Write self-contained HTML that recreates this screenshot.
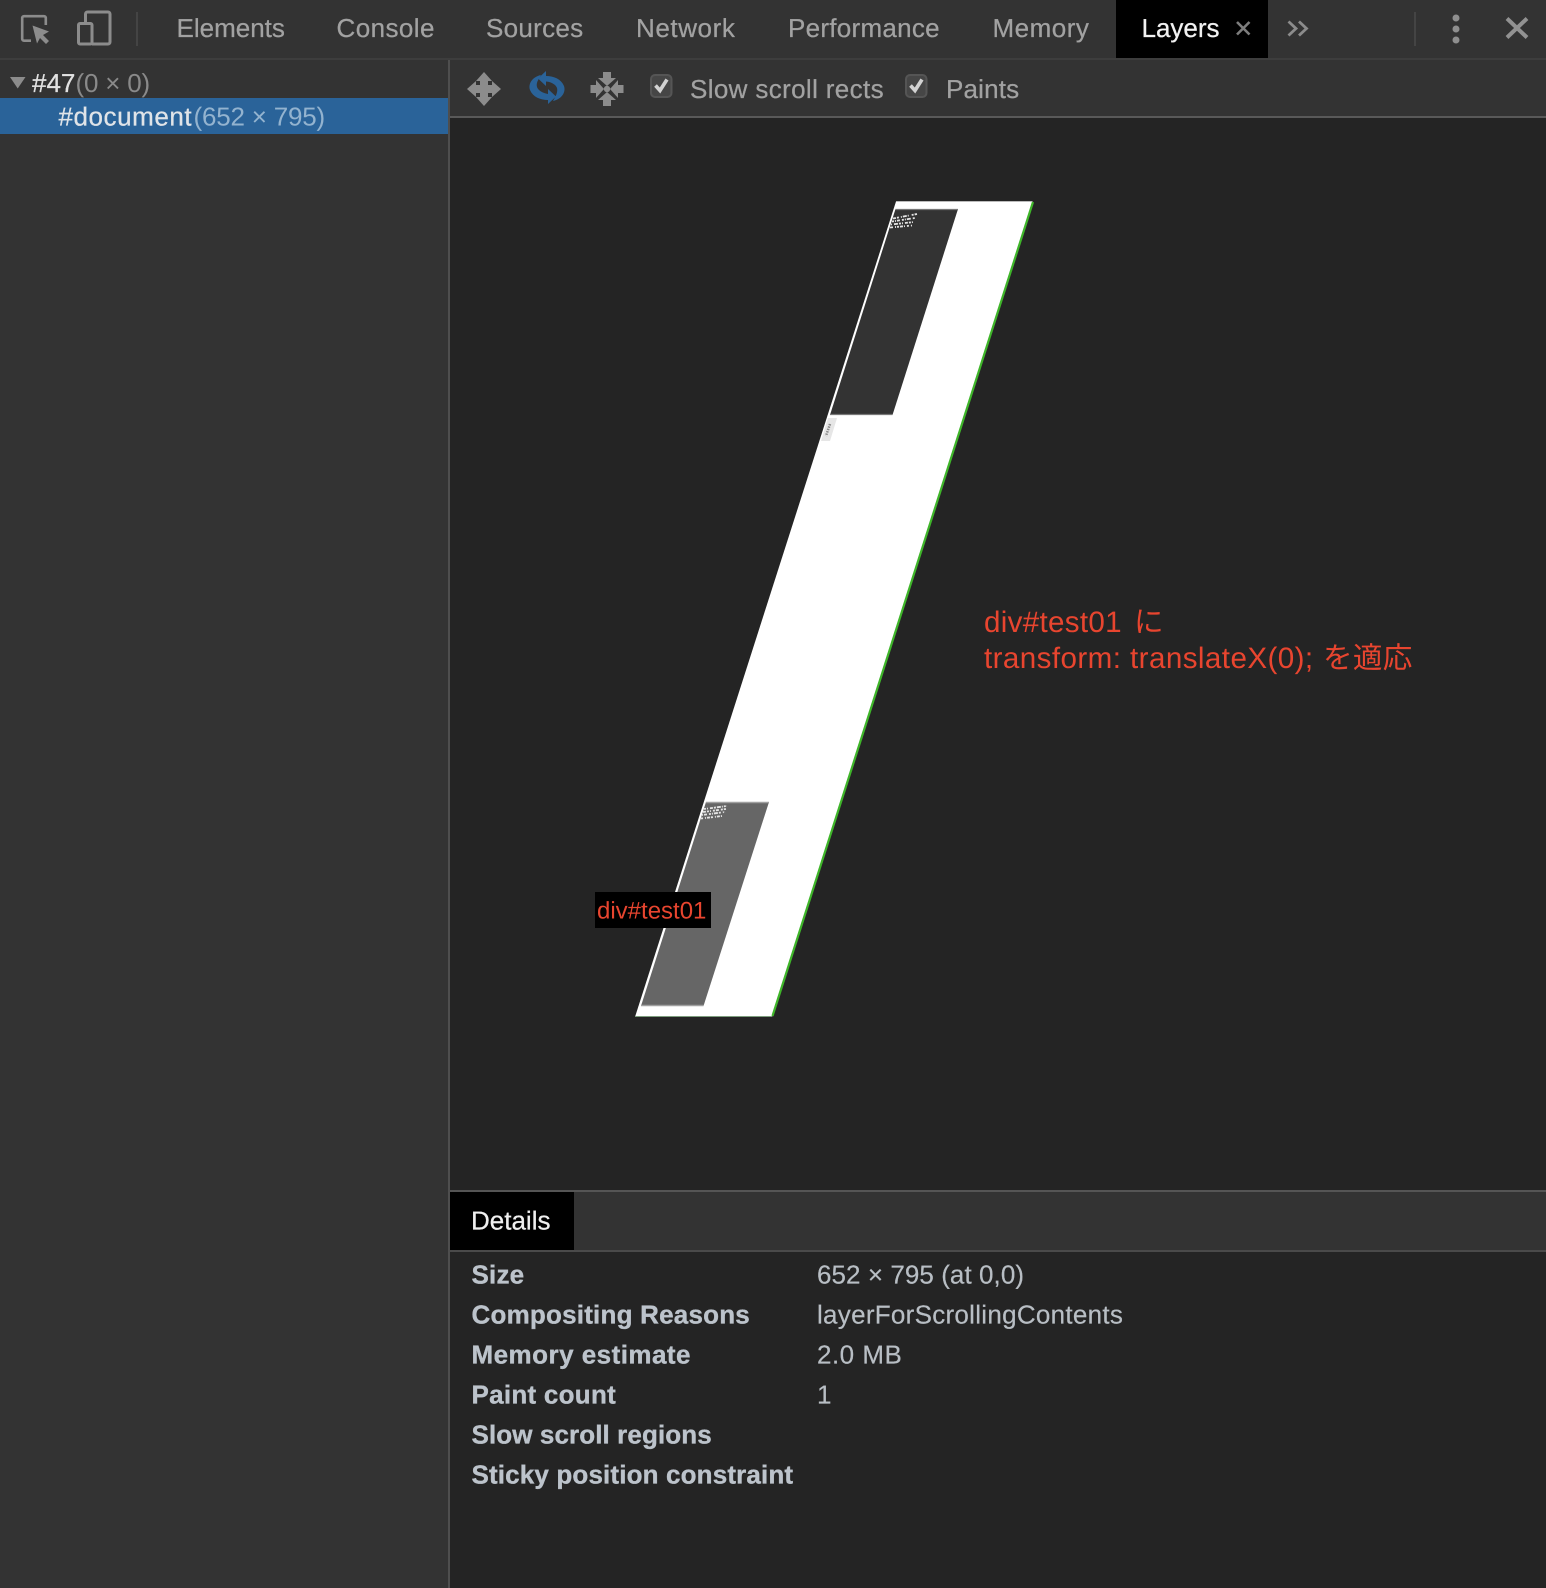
<!DOCTYPE html>
<html lang="ja">
<head>
<meta charset="utf-8">
<title>Layers</title>
<style>
html,body{margin:0;padding:0;background:#242424;width:1546px;height:1588px;overflow:hidden}
svg{display:block;position:absolute;left:0;top:0}
text{font-family:"Liberation Sans","Noto Sans CJK JP",sans-serif;font-size:26px;text-rendering:geometricPrecision}
.tab{fill:#a2a2a2;stroke:#a2a2a2;stroke-width:.25px}
.lab{fill:#bcc3cb;stroke:#bcc3cb;stroke-width:.35px;font-weight:bold}
.val{fill:#b8bec4;stroke:#b8bec4;stroke-width:.2px}
.red{fill:#e8452f}
</style>
</head>
<body>
<svg width="1546" height="1588" viewBox="0 0 1546 1588" xmlns="http://www.w3.org/2000/svg">
  <!-- backgrounds -->
  <rect width="1546" height="1588" fill="#242424"/>
  <rect width="1546" height="58" fill="#333"/>
  <rect y="58" width="1546" height="2" fill="#3d3d3d"/>
  <rect y="60" width="449" height="1528" fill="#333"/>
  <rect x="448" y="60" width="2" height="1528" fill="#4e4e4e"/>
  <rect x="450" y="60" width="1096" height="56" fill="#333"/>
  <rect x="450" y="116" width="1096" height="2" fill="#595959"/>

  <!-- top icons -->
  <path fill="none" stroke="#8c8c8c" stroke-width="2.600" d="M31 40.700H24a1.800 1.800 0 0 1-1.800-1.800V18a1.800 1.800 0 0 1 1.800-1.800H44a1.800 1.800 0 0 1 1.800 1.800V25"/>
  <path d="M32.500 25.500L49 31.500L43 35L49 41L46 44L40 38L37 43.500Z" fill="#8c8c8c"/>
  <g fill="none" stroke="#8c8c8c" stroke-width="3">
    <path d="M85.500 23V14a2 2 0 0 1 2-2H108a2 2 0 0 1 2 2V42a2 2 0 0 1-2 2H92"/>
    <rect x="78.500" y="23.500" width="13.500" height="20.500" rx="1.500"/>
  </g>
  <rect x="136" y="12" width="2" height="34" fill="#444"/>

  <!-- tabs -->
  <text x="176.500" y="37" class="tab">Elements</text>
  <text x="336.500" y="37" class="tab" style="letter-spacing:.43px">Console</text>
  <text x="486" y="37" class="tab" style="letter-spacing:.29px">Sources</text>
  <text x="636" y="37" class="tab" style="letter-spacing:.58px">Network</text>
  <text x="788" y="37" class="tab" style="letter-spacing:.28px">Performance</text>
  <text x="992.500" y="37" class="tab" style="letter-spacing:.5px">Memory</text>
  <rect x="1116" width="152" height="58" fill="#000"/>
  <text x="1141.500" y="37" fill="#f2f2f2" stroke="#f2f2f2" stroke-width=".25">Layers</text>
  <path d="M1237 22L1249.500 34.500M1249.500 22L1237 34.500" stroke="#7d7d7d" stroke-width="2.600" fill="none"/>
  <path d="M1288.500 21.500L1296 28.500L1288.500 35.500M1299 21.500L1306.500 28.500L1299 35.500" stroke="#8c8c8c" stroke-width="2.800" fill="none"/>
  <rect x="1414" y="12" width="2" height="34" fill="#444"/>
  <circle cx="1456" cy="18" r="3.500" fill="#8f8f8f"/>
  <circle cx="1456" cy="29" r="3.500" fill="#8f8f8f"/>
  <circle cx="1456" cy="40" r="3.500" fill="#8f8f8f"/>
  <path d="M1507 18.500L1527 37.500M1527 18.500L1507 37.500" stroke="#929292" stroke-width="4" fill="none"/>

  <!-- layer tree -->
  <path d="M10 77H25.500L17.700 88.500Z" fill="#8c8c8c"/>
  <text x="32" y="92" fill="#e2e2e2" stroke="#e2e2e2" stroke-width=".25">#47</text>
  <text x="75.500" y="92" fill="#8a8a8a" style="letter-spacing:-.2px">(0 × 0)</text>
  <rect y="98" width="448" height="36" fill="#2a6399"/>
  <text x="58.500" y="125.500" fill="#e0e4e8" stroke="#e0e4e8" stroke-width=".25" style="letter-spacing:.56px">#document</text>
  <text x="193.500" y="125.500" fill="#93b3cf" style="letter-spacing:-.2px">(652 × 795)</text>

  <!-- toolbar icons -->
  <path fill="#8c8c8c" d="M484 72L492 81H488V85H492V81L501 89L492 97V93H488V97H492L484 106L476 97H480V93H476V97L467 89L476 81V85H480V81H476Z"/>
  <g fill="#2a6399">
    <path d="M541 75C532 77 528 84 530 90C533 97 540 100 548 100V94C542 93 538 90 537 87C536 83 538 80 541 75Z"/>
    <path d="M553 101C562 99 566 92 564 86C561 79 554 76 546 76V81.500C552 82 556 85 557 88C558 92 556 96 553 101Z"/>
    <path d="M546 71V86L538 78.500ZM548 89V104L556 96.500Z"/>
  </g>
  <g fill="#8c8c8c">
    <path d="M603 72H611V78H616L607 86L598 78H603Z"/>
    <path d="M603 106H611V100H616L607 92L598 100H603Z"/>
    <path d="M590.500 85V93H596V98L604 89L596 80V85Z"/>
    <path d="M623.500 85V93H618V98L610 89L618 80V85Z"/>
    <circle cx="607" cy="89" r="3.200"/>
  </g>
  <rect x="651" y="75" width="20.500" height="22" rx="4" fill="#464646" stroke="#555" stroke-width="2"/>
  <path d="M655.500 85.500L660 90.500L667 79.500" fill="none" stroke="#d2d2d2" stroke-width="3.600"/>
  <text x="690" y="98" class="tab" style="letter-spacing:.36px">Slow scroll rects</text>
  <rect x="906" y="75" width="20.500" height="22" rx="4" fill="#464646" stroke="#555" stroke-width="2"/>
  <path d="M910.500 85.500L915 90.500L922 79.500" fill="none" stroke="#d2d2d2" stroke-width="3.600"/>
  <text x="946" y="98" class="tab" style="letter-spacing:.17px">Paints</text>

  <!-- layer visual -->
  <polygon points="896,201.500 1033,201.500 772,1017 635,1017" fill="#fff"/>
  <path d="M1033 202L772.500 1016" stroke="#3fb52a" stroke-width="2.200" fill="none"/>
  <path d="M635 1016.500H772" stroke="#7d9d7d" stroke-width="1" fill="none"/>
  <path d="M896 201.500H1032" stroke="#bbb" stroke-width="1" fill="none"/>
  <polygon points="895.500,209 958,209 892.500,415 830,415" fill="#333"/>
  <path d="M895.500 209.500H958M830 414.500H892.500" stroke="#777" stroke-width="1.200" fill="none"/>
  <polygon points="706,802 769,802 703.500,1006 641,1006" fill="#666"/>
  <path d="M706 802.500H769M641 1005.500H703.500" stroke="#a0a0a0" stroke-width="1.400" fill="none"/>

  <!-- tiny speckled page text -->
  <g fill="none" stroke="#e4e4e4" stroke-width="1.800">
    <path stroke-dasharray="3 1 2 2 1 1 4 1 1 3 2 1" d="M893 218.500L917 214"/>
    <path stroke-dasharray="2 1 1 1 3 2 2 1 1 1 4 2" d="M892 221.500L915 218"/>
    <path stroke-dasharray="1 2 4 1 2 1 1 2 3 1 2 1" d="M891 224.500L914 222"/>
    <path stroke-dasharray="3 2 1 1 2 1 3 1 1 2 2 2" d="M890 227.500L912 225.500"/>
    <path stroke-dasharray="2 1 1 2 3 1 2 1 4 1 1 1" d="M704 809L727 806"/>
    <path stroke-dasharray="3 1 2 1 1 2 2 1 3 2 2 1" d="M703 812L726 809"/>
    <path stroke-dasharray="1 1 3 2 2 1 1 1 4 1 2 2" d="M702 815L725 812"/>
    <path stroke-dasharray="2 2 1 1 3 1 2 2 1 1 3 1" d="M701 818.500L722 816"/>
  </g>
  <polygon points="828,418 837,418 830,441 821,441" fill="#e6e6e6"/>
  <path d="M830 424L826 436" stroke="#8a8a8a" stroke-width="2.500" stroke-dasharray="1.500 1" fill="none"/>

  <!-- annotation -->
  <rect x="595" y="892" width="116" height="36" fill="#000"/>
  <text x="597" y="918.500" class="red" style="font-size:24px">div#test01</text>
  <text x="984" y="632" class="red" style="font-size:29.600px"><tspan style="letter-spacing:.3px">div#test01</tspan><tspan x="1134">に</tspan></text>
  <text x="984" y="668" class="red" style="font-size:29.600px"><tspan style="letter-spacing:.42px">transform: translateX(0);</tspan><tspan x="1323" style="letter-spacing:.3px">を適応</tspan></text>

  <!-- details -->
  <rect x="450" y="1190" width="1096" height="2" fill="#555"/>
  <rect x="450" y="1192" width="1096" height="58" fill="#333"/>
  <rect x="450" y="1250" width="1096" height="2" fill="#4a4a4a"/>
  <rect x="450" y="1192" width="124" height="58" fill="#000"/>
  <text x="471" y="1229.500" fill="#f0f0f0" stroke="#f0f0f0" stroke-width=".25">Details</text>

  <text x="471.500" y="1283.500" class="lab" style="letter-spacing:.2px">Size</text>
  <text x="817" y="1283.500" class="val" style="letter-spacing:.06px">652 × 795 (at 0,0)</text>
  <text x="471.500" y="1323.500" class="lab" style="letter-spacing:.21px">Compositing Reasons</text>
  <text x="817" y="1323.500" class="val" style="letter-spacing:.28px">layerForScrollingContents</text>
  <text x="471.500" y="1363.500" class="lab" style="letter-spacing:.47px">Memory estimate</text>
  <text x="817" y="1363.500" class="val" style="letter-spacing:.5px">2.0 MB</text>
  <text x="471.500" y="1403.500" class="lab" style="letter-spacing:.27px">Paint count</text>
  <text x="817" y="1403.500" class="val">1</text>
  <text x="471.500" y="1443.500" class="lab" style="letter-spacing:.1px">Slow scroll regions</text>
  <text x="471.500" y="1483.500" class="lab" style="letter-spacing:.15px">Sticky position constraint</text>
</svg>
</body>
</html>
